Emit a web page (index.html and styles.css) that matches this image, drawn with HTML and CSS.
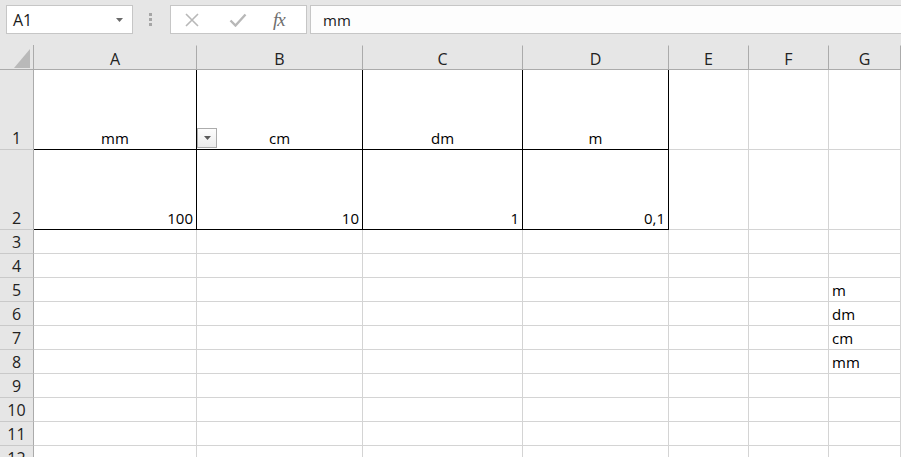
FILE: index.html
```html
<!DOCTYPE html>
<html lang="en">
<head>
    <meta charset="UTF-8">
    <meta name="viewport" content="width=device-width, initial-scale=1.0">
    <title>Book1 - Excel</title>
    <link rel="stylesheet" href="styles.css">
</head>
<body>

    <div class="toolbar">
        <div class="namebox">
            <span>A1</span>
            <svg class="caret" width="7" height="4" viewBox="0 0 7 4"><path d="M0 0h7L3.5 4z" fill="#6a6a6a"/></svg>
        </div>
        <div class="grip"><i></i><i></i><i></i></div>
        <div class="fx-buttons">
            <svg class="cancel" width="14" height="14" viewBox="0 0 14 14">
                <path d="M1 1L13 13M13 1L1 13" stroke="#b8b8b8" stroke-width="1.6" fill="none"/>
            </svg>
            <svg class="enter" width="18" height="14" viewBox="0 0 18 14">
                <path d="M1.5 7.5L6.5 12.5L16.5 1.5" stroke="#b8b8b8" stroke-width="2.4" fill="none"/>
            </svg>
            <span class="fx">fx</span>
        </div>
        <div class="formula">mm</div>
    </div>

    <div class="sheet" id="sheet">
        <!-- cells are built by the script below -->
    </div>

    <script>
        const cols = ['A', 'B', 'C', 'D', 'E', 'F', 'G'];

        // value, alignment
        const data = {
            1: { A: ['mm', 'c'], B: ['cm', 'c'], C: ['dm', 'c'], D: ['m', 'c'] },
            2: { A: ['100', 'r'], B: ['10', 'r'], C: ['1', 'r'], D: ['0,1', 'r'] },
            5: { G: ['m', 'l'] },
            6: { G: ['dm', 'l'] },
            7: { G: ['cm', 'l'] },
            8: { G: ['mm', 'l'] }
        };

        // the bordered table
        const boxed = ['A', 'B', 'C', 'D'];

        function makeCell(cls, text) {
            const cell = document.createElement('div');
            cell.className = cls;
            if (text) {
                const span = document.createElement('span');
                span.textContent = text;
                cell.appendChild(span);
            }
            return cell;
        }

        function buildSheet() {
            const sheet = document.getElementById('sheet');

            const corner = makeCell('corner');
            corner.innerHTML = '<svg width="16" height="19" viewBox="0 0 16 19"><path d="M16 0V19H0z" fill="#b9b9b9"/></svg>';
            sheet.appendChild(corner);
            cols.forEach(col => sheet.appendChild(makeCell('colhead', col)));

            for (let r = 1; r <= 12; r++) {
                sheet.appendChild(makeCell('rowhead', String(r)));
                cols.forEach(col => {
                    const entry = (data[r] || {})[col];
                    let cls = 'cell';
                    if (entry) cls += ' ' + entry[1];
                    if (r <= 2 && boxed.includes(col)) cls += ' boxed';
                    const cell = makeCell(cls, entry ? entry[0] : '');

                    if (r === 1 && col === 'B') {
                        const filter = document.createElement('div');
                        filter.className = 'filter';
                        filter.innerHTML = '<svg width="7" height="4" viewBox="0 0 7 4"><path d="M0 0h7L3.5 4z" fill="#5a5a5a"/></svg>';
                        cell.appendChild(filter);
                    }
                    sheet.appendChild(cell);
                });
            }
        }

        buildSheet();
    </script>

</body>
</html>
```

FILE: styles.css
```css
* {
    box-sizing: border-box;
}

body {
    margin: 0;
    height: 457px;
    overflow: hidden;
    background-color: #fff;
    font-family: "Open Sans", Arial, sans-serif;
    color: #1a1a1a;
}

/* formula bar */

.toolbar {
    display: flex;
    align-items: flex-start;
    height: 45px;
    padding-top: 5px;
    background-color: #e6e6e6;
}

.namebox {
    display: flex;
    align-items: center;
    justify-content: space-between;
    width: 127px;
    height: 29px;
    margin-left: 6px;
    padding: 0 9px 0 6px;
    border: 1px solid #c6c6c6;
    background-color: #fff;
    font-size: 16px;
}

.grip {
    display: flex;
    flex-direction: column;
    gap: 2px;
    width: 37px;
    padding: 8px 0 0 16px;
}

.grip i {
    width: 3px;
    height: 3px;
    background-color: #a6a6a6;
}

.fx-buttons {
    display: flex;
    align-items: center;
    width: 137px;
    height: 29px;
    padding-left: 14px;
    border: 1px solid #c6c6c6;
    background-color: #fff;
}

.fx-buttons .enter {
    margin-left: 30px;
}

.fx {
    margin-left: 26px;
    font-family: "Liberation Serif", "Times New Roman", serif;
    font-style: italic;
    font-size: 19px;
    color: #6e6e6e;
    letter-spacing: -1px;
}

.formula {
    flex: 1;
    display: flex;
    align-items: center;
    height: 29px;
    margin-left: 3px;
    padding-left: 12px;
    border: 1px solid #c6c6c6;
    border-right: none;
    background-color: #fdfdfd;
    font-size: 15px;
}

/* sheet grid */

.sheet {
    display: grid;
    grid-template-columns: 34px 163px 166px 160px 146px 80px 80px 1fr;
    grid-template-rows: 25px 80px 80px repeat(10, 24px);
}

.corner,
.colhead,
.rowhead,
.cell {
    display: flex;
    align-items: flex-end;
    border-right: 1px solid #d4d4d4;
    border-bottom: 1px solid #d4d4d4;
    line-height: 20px;
    white-space: nowrap;
}

.corner {
    justify-content: flex-end;
    padding: 0 3px 1px 0;
    background-color: #e6e6e6;
    border-right-color: #ababab;
    border-bottom-color: #ababab;
}

.corner svg {
    display: block;
}

.colhead {
    justify-content: center;
    padding-bottom: 0;
    background-color: #e6e6e6;
    border-right-color: #ababab;
    border-bottom-color: #ababab;
    border-top: 1px solid #e6e6e6;
    font-size: 16px;
    color: #222;
}

.rowhead {
    justify-content: center;
    padding-bottom: 1px;
    background-color: #e6e6e6;
    border-right-color: #ababab;
    border-bottom-color: #c9c9c9;
    font-size: 16px;
    color: #222;
}

.cell {
    position: relative;
    padding: 0 3px 1px 3px;
    font-size: 15px;
    color: #000;
}

.cell.c {
    justify-content: center;
}

.cell.r {
    justify-content: flex-end;
}

.cell.l {
    justify-content: flex-start;
    padding-left: 3px;
}

.cell.boxed {
    border-right-color: #000;
    border-bottom-color: #000;
}

/* autofilter style drop-down in B1 */
.filter {
    position: absolute;
    left: 0;
    bottom: 1px;
    display: flex;
    align-items: center;
    justify-content: center;
    width: 20px;
    height: 20px;
    border: 1px solid #acacac;
    background: linear-gradient(#fdfdfd, #ececec);
}

.filter svg {
    display: block;
}
```
